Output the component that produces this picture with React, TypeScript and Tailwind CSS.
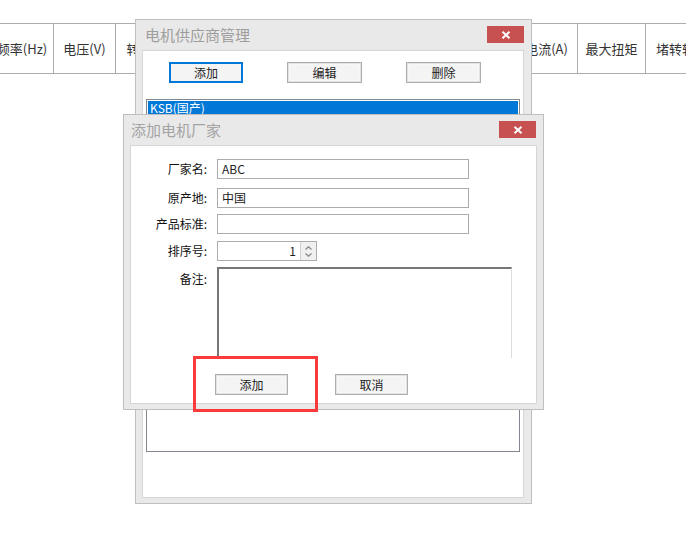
import React from "react";

const font = { fontFamily: '"Noto Sans CJK SC", "Microsoft YaHei", "Noto Sans", sans-serif' };

function CloseBtn() {
  return (
    <div className="w-[37px] h-[17px] bg-[#c75050] flex items-center justify-center">
      <svg width="10" height="8" viewBox="0 0 10 8">
        <path d="M1.5 0.8 L8.5 7.2 M8.5 0.8 L1.5 7.2" stroke="#ffffff" strokeWidth="2" />
      </svg>
    </div>
  );
}

function WinButton({ label, w, focused }: { label: string; w: string; focused?: boolean }) {
  return (
    <div
      className={
        "h-[21px] flex items-center justify-center text-[12px] text-[#222] bg-[#f4f4f4] " +
        w +
        (focused
          ? " border-2 border-[#0078d7]"
          : " border border-[#adadad] shadow-[inset_0_0_0_1px_#e3e3e3,inset_0_0_0_2px_#f7f7f7]")
      }
    >
      {label}
    </div>
  );
}

function TableHeader() {
  const cols: { label: string; w: string }[] = [
    { label: "频率(Hz)", w: "w-[63px]" },
    { label: "电压(V)", w: "w-[62px]" },
    { label: "转速(r/min)", w: "w-[90px]" },
    { label: "功率(kW)", w: "w-[100px]" },
    { label: "效率(%)", w: "w-[100px]" },
    { label: "功率因数", w: "w-[110px]" },
    { label: "电流(A)", w: "w-[62px]" },
    { label: "最大扭矩", w: "w-[68px]" },
    { label: "堵转转矩", w: "w-[72px]" },
  ];
  return (
    <div className="mt-[23px] ml-[-9px] flex h-[51px] border-y border-[#acacac] w-max">
      {cols.map((c, i) => (
        <div
          key={i}
          className={
            "flex items-center justify-center text-[13px] text-[#333] shrink-0 whitespace-nowrap " +
            c.w +
            (i < cols.length - 1 ? " border-r border-[#acacac]" : "")
          }
        >
          {c.label}
        </div>
      ))}
    </div>
  );
}

function Field({ label, value, mt }: { label: string; value?: string; mt: string }) {
  return (
    <div className={"flex items-center " + mt}>
      <div className="w-[76px] text-right text-[12px] text-[#111] pr-0">{label}:</div>
      <div className="ml-[10px] w-[252px] h-[20px] border border-[#acacac] bg-white flex items-center px-[4px] text-[12px] text-[#222]">
        {value}
      </div>
    </div>
  );
}

export default function App() {
  return (
    <div className="relative w-[686px] h-[551px] bg-white overflow-hidden" style={font}>
      <TableHeader />

      {/* Background dialog: 电机供应商管理 */}
      <div className="absolute left-[135px] top-[19px] w-[397px] h-[485px] border border-[#bfbfbf] bg-[#e9e9e9] flex flex-col pl-[6px] pr-[7px] pb-[5px]">
        <div className="h-[30px] flex items-start justify-between shrink-0">
          <div className="pl-[3px] pt-[5px] text-[15px] text-[#9d9d9d] leading-[20px]">电机供应商管理</div>
          <div className="pt-[6px]">
            <CloseBtn />
          </div>
        </div>
        <div className="flex-1 bg-white border border-[#d6d6d6] flex flex-col">
          <div className="flex pl-[26px] pt-[11px] gap-[44px]">
            <WinButton label="添加" w="w-[74px]" focused />
            <WinButton label="编辑" w="w-[75px]" />
            <WinButton label="删除" w="w-[75px]" />
          </div>
          <div className="ml-[3px] mt-[16px] w-[374px] h-[353px] border border-[#828790] bg-white p-[1px]">
            <div className="h-[14px] bg-[#0078d7] text-white text-[12px] leading-[14px] pl-[2px]">KSB(国产)</div>
          </div>
        </div>
      </div>

      {/* Foreground dialog: 添加电机厂家 */}
      <div className="absolute left-[123px] top-[114px] w-[421px] h-[296px] border border-[#bfbfbf] bg-[#e9e9e9] flex flex-col pl-[6px] pr-[6px] pb-[5px]">
        <div className="h-[30px] flex items-start justify-between shrink-0">
          <div className="pl-[1px] pt-[5px] text-[15px] text-[#a3a3a3] leading-[20px]">添加电机厂家</div>
          <div className="pt-[6px] pr-[1px]">
            <CloseBtn />
          </div>
        </div>
        <div className="flex-1 bg-white border border-[#d6d6d6] flex flex-col">
          <Field label="厂家名" value="ABC" mt="mt-[13px]" />
          <Field label="原产地" value="中国" mt="mt-[9px]" />
          <Field label="产品标准" mt="mt-[6px]" />
          <div className="flex items-center mt-[7px]">
            <div className="w-[76px] text-right text-[12px] text-[#111]">排序号:</div>
            <div className="ml-[10px] w-[100px] h-[20px] border border-[#acacac] bg-white flex">
              <div className="flex-1 flex items-center justify-end pr-[4px] text-[12px] text-[#222]">1</div>
              <div className="w-[16px] border-l border-[#d0d0d0] bg-[#f0f0f0] flex flex-col items-center justify-center gap-[3px]">
                <svg width="7" height="4" viewBox="0 0 7 4">
                  <path d="M0.5 3.5 L3.5 0.8 L6.5 3.5" stroke="#8a8a8a" strokeWidth="1.3" fill="none" />
                </svg>
                <svg width="7" height="4" viewBox="0 0 7 4">
                  <path d="M0.5 0.5 L3.5 3.2 L6.5 0.5" stroke="#8a8a8a" strokeWidth="1.3" fill="none" />
                </svg>
              </div>
            </div>
          </div>
          <div className="flex items-start mt-[6px]">
            <div className="w-[76px] text-right text-[12px] text-[#111] pt-[3px]">备注:</div>
            <div className="ml-[10px] w-[295px] h-[91px] bg-white border-t-2 border-l-2 border-r border-t-[#767676] border-l-[#767676] border-r-[#dcdcdc]" />
          </div>
          <div className="flex pl-[84px] mt-[16px] gap-[47px]">
            <WinButton label="添加" w="w-[73px]" />
            <WinButton label="取消" w="w-[73px]" />
          </div>
        </div>
      </div>

      {/* Red highlight */}
      <div className="absolute left-[193px] top-[356px] w-[125px] h-[56px] border-[3px] border-[#fb3b3b]" />
    </div>
  );
}
